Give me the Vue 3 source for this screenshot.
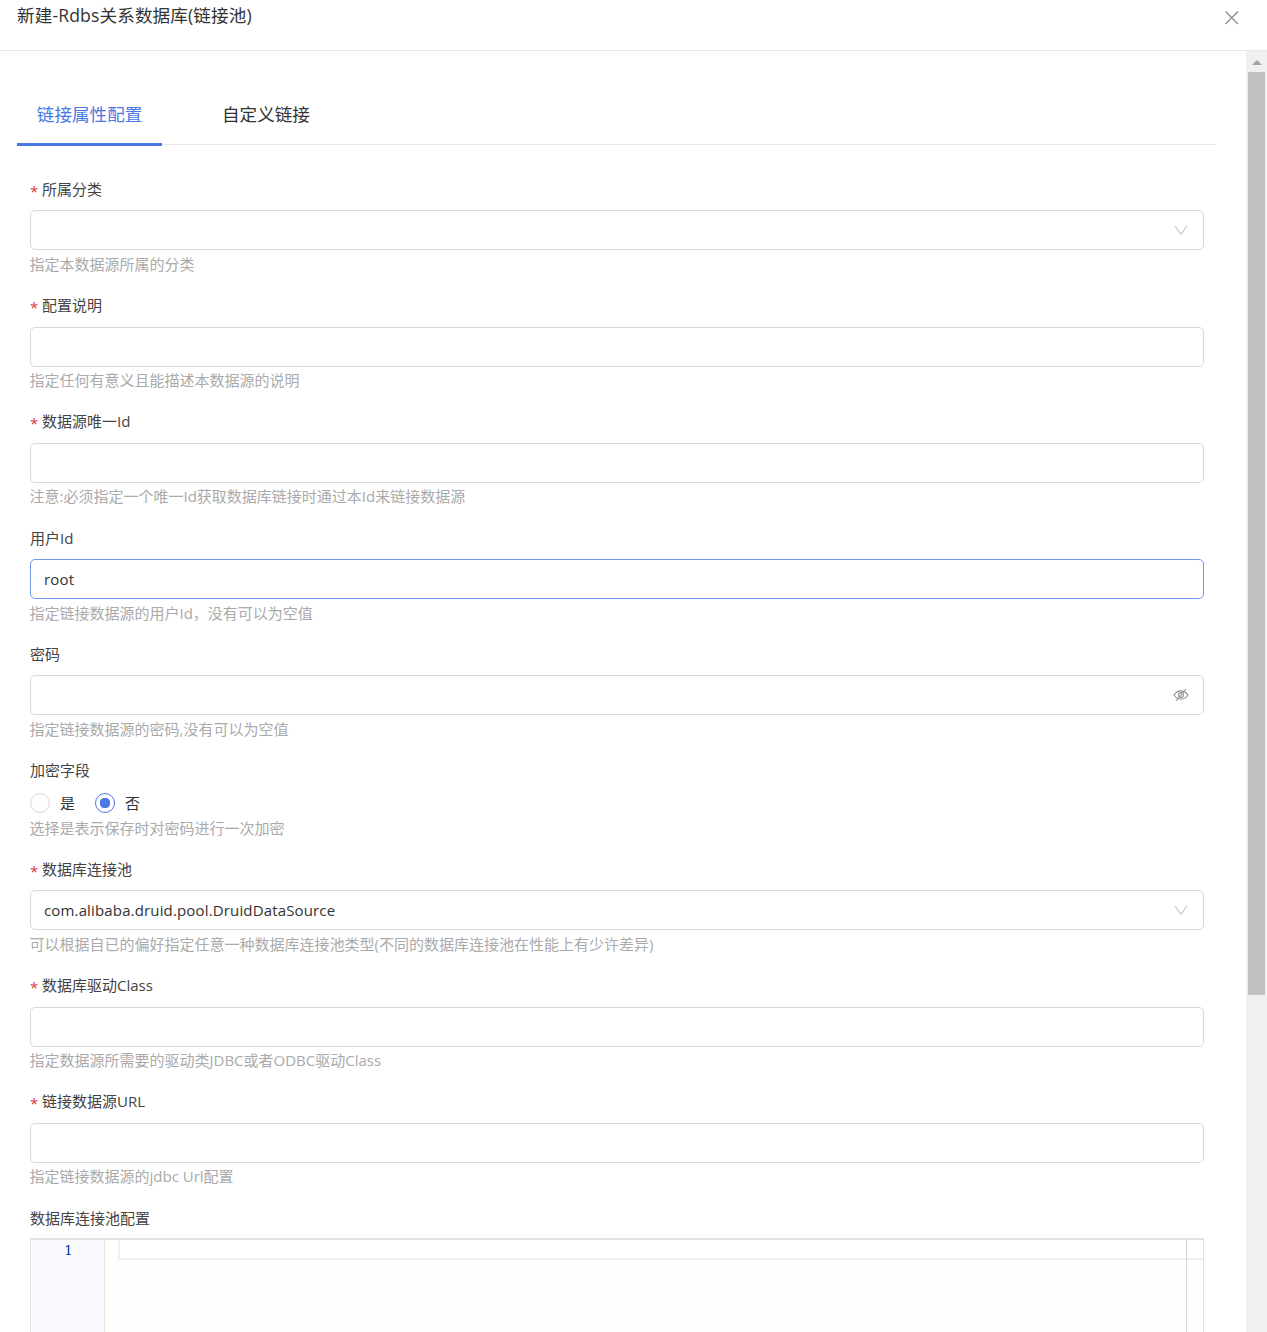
<script setup>
const fields = [
  { label: '所属分类', required: true, kind: 'select', value: '', help: '指定本数据源所属的分类' },
  { label: '配置说明', required: true, kind: 'input', value: '', help: '指定任何有意义且能描述本数据源的说明' },
  { label: '数据源唯一Id', required: true, kind: 'input', value: '', help: '注意:必须指定一个唯一Id获取数据库链接时通过本Id来链接数据源' },
  { label: '用户Id', kind: 'input', value: 'root', focus: true, help: '指定链接数据源的用户Id，没有可以为空值' },
  { label: '密码', kind: 'password', value: '', help: '指定链接数据源的密码,没有可以为空值' },
  { label: '加密字段', kind: 'radio', help: '选择是表示保存时对密码进行一次加密' },
  { label: '数据库连接池', required: true, kind: 'select', value: 'com.alibaba.druid.pool.DruidDataSource', help: '可以根据自已的偏好指定任意一种数据库连接池类型(不同的数据库连接池在性能上有少许差异)' },
  { label: '数据库驱动Class', required: true, kind: 'input', value: '', help: '指定数据源所需要的驱动类JDBC或者ODBC驱动Class' },
  { label: '链接数据源URL', required: true, kind: 'input', value: '', help: '指定链接数据源的jdbc Url配置' },
]
</script>

<template>
  <div class="dialog">
    <header class="head">
      <h1 class="title">新建-Rdbs关系数据库(链接池)</h1>
      <svg class="close" width="14" height="14" viewBox="0 0 14 14" aria-label="关闭">
        <path d="M.5 .5 13 13M13 .5 .5 13" fill="none" stroke="#8c8c8c" stroke-width="1.3" />
      </svg>
    </header>
    <div class="body">
      <main class="content">
        <nav class="tabs">
          <a class="tab active">链接属性配置</a>
          <a class="tab">自定义链接</a>
        </nav>
        <form class="form">
          <div v-for="f in fields" :key="f.label" class="field" :class="{ 'field-radio': f.kind === 'radio' }">
            <label class="label"><span v-if="f.required" class="star">*</span>{{ f.label }}</label>
            <div v-if="f.kind === 'radio'" class="radios">
              <span class="radio"><i class="dot"></i>是</span>
              <span class="radio on"><i class="dot"></i>否</span>
            </div>
            <div v-else class="control" :class="{ focus: f.focus }">
              <span class="value">{{ f.value }}</span>
              <svg v-if="f.kind === 'select'" class="suffix" width="14" height="10" viewBox="0 0 14 10">
                <path d="M1 1 7 9 13 1" fill="none" stroke="#c4c4c4" stroke-width="1.1" />
              </svg>
              <svg v-if="f.kind === 'password'" class="suffix eye" width="16" height="14" viewBox="0 0 16 14">
                <path d="M1 7C3 4.2 5.3 2.9 8 2.9S13 4.2 15 7C13 9.8 10.7 11.1 8 11.1S3 9.8 1 7Z" fill="none" stroke="#8f8f8f" stroke-width="1.1" />
                <circle cx="8" cy="7" r="2.4" fill="none" stroke="#8f8f8f" stroke-width="1.1" />
                <path d="M3 13 13 1" fill="none" stroke="#8f8f8f" stroke-width="1.1" />
              </svg>
            </div>
            <p class="help">{{ f.help }}</p>
          </div>
          <div class="field">
            <label class="label">数据库连接池配置</label>
            <div class="editor">
              <div class="gutter">1</div>
              <div class="code"></div>
              <div class="active-line"></div>
              <div class="print-margin"></div>
            </div>
          </div>
        </form>
      </main>
      <aside class="scrollbar">
        <i class="arrow"></i>
        <div class="thumb"></div>
      </aside>
    </div>
  </div>
</template>

<style>
html, body { margin: 0; overflow: hidden; background: #fff; }
</style>

<style scoped>
.dialog {
  height: 1332px;
  overflow: hidden;
  display: flex;
  flex-direction: column;
  font-family: "Open Sans", "Noto Sans CJK SC", sans-serif;
  color: #333;
}
.head {
  height: 50px;
  flex: none;
  display: flex;
  justify-content: space-between;
  padding: 0 28px 0 17px;
  border-bottom: 1px solid #e8e8e8;
}
.title {
  margin: 0;
  font-size: 17.6px;
  font-weight: 400;
  line-height: 30px;
  letter-spacing: 0.12px;
  color: #333;
}
.close { margin-top: 11px; }
.body { flex: 1; display: flex; min-height: 0; }
.content { flex: 1; min-width: 0; padding: 0 30px 0 17px; }
.tabs {
  display: flex;
  height: 93px;
  align-items: flex-end;
  border-bottom: 1px solid #e8e8e8;
}
.tab {
  height: 41px;
  padding: 0 19.8px;
  margin-right: 40px;
  font-size: 17.6px;
  line-height: 24px;
  color: #333;
  box-sizing: content-box;
  margin-bottom: -2px;
  border-bottom: 3px solid transparent;
}
.tab.active { color: #4a78e4; border-bottom-color: #4a78e4; }
.form { padding: 33.4px 12px 0 13px; }
.field { height: 116.25px; display: flow-root; }
.field-radio { height: 98.75px; }
.label {
  display: block;
  font-size: 15px;
  line-height: 22px;
  height: 22px;
  margin-top: -0.45px;
  margin-bottom: 10.45px;
  color: #444;
}
.star {
  color: #d9363e;
  margin-right: 5px;
  font-size: 15px;
  display: inline-block;
  width: 7px;
  vertical-align: -2px;
}
.control {
  height: 40px;
  box-sizing: border-box;
  border: 1px solid #d9d9d9;
  border-radius: 5px;
  display: flex;
  align-items: center;
  justify-content: space-between;
  padding: 0 15px 0 13px;
  background: #fff;
}
.control.focus { border-color: #6e97ee; }
.value { font-size: 15px; letter-spacing: 0.15px; color: #333; }
.suffix { flex: none; }
.eye { margin-right: -1px; }
.help {
  margin: 2.55px 0 0 -0.5px;
  font-size: 15px;
  line-height: 22px;
  color: #aaa;
}
.field-radio .help { margin-top: 0; }
.field-radio .label { margin-bottom: 0.45px; }
.radios {
  display: flex;
  gap: 20px;
  height: 22px;
  margin: 10.6px 0 3px;
  font-size: 15px;
  line-height: 22px;
  color: #333;
}
.radio { display: flex; align-items: center; gap: 10px; }
.dot {
  width: 20px;
  height: 20px;
  box-sizing: border-box;
  border: 1px solid #d9d9d9;
  border-radius: 50%;
  background: #fff;
  display: block;
}
.radio.on .dot {
  border-color: #4a78e4;
  background: radial-gradient(circle, #4a78e4 0 5px, #fff 5.5px);
}
.editor {
  position: relative;
  height: 200px;
  margin-top: -1px;
  box-sizing: border-box;
  border: 1px solid #e3e3e3;
  border-top-width: 2px;
  display: flex;
}
.gutter {
  flex: none;
  background: #f8f9fc;
  border-right: 1px solid #e3e3e3;
  font-family: "DejaVu Serif", serif;
  font-size: 13px;
  line-height: 20px;
  padding: 1px 0 0 2px;
  box-sizing: border-box;
  width: 74px;
  text-align: center;
  color: #0a2fa5;
}
.code { flex: 1; background: #fefefc; }
.active-line {
  position: absolute;
  left: 87px;
  right: 0;
  top: 0;
  height: 20px;
  box-sizing: border-box;
  border-left: 2px solid #f0f0ee;
  border-bottom: 2px solid #f0f0ee;
  background: #fff;
}
.print-margin {
  position: absolute;
  left: 1155px;
  top: 0;
  bottom: 0;
  width: 1px;
  background: #d6d6d6;
}
.scrollbar {
  position: relative;
  width: 21px;
  flex: none;
  background: #f0f0f0;
  box-sizing: border-box;
  padding: 21px 2px 0;
}
.thumb { height: 923px; background: #c1c1c1; }
.arrow {
  position: absolute;
  left: 6px;
  top: 9px;
  border-left: 5px solid transparent;
  border-right: 5px solid transparent;
  border-bottom: 5px solid #a3a3a3;
}
</style>
